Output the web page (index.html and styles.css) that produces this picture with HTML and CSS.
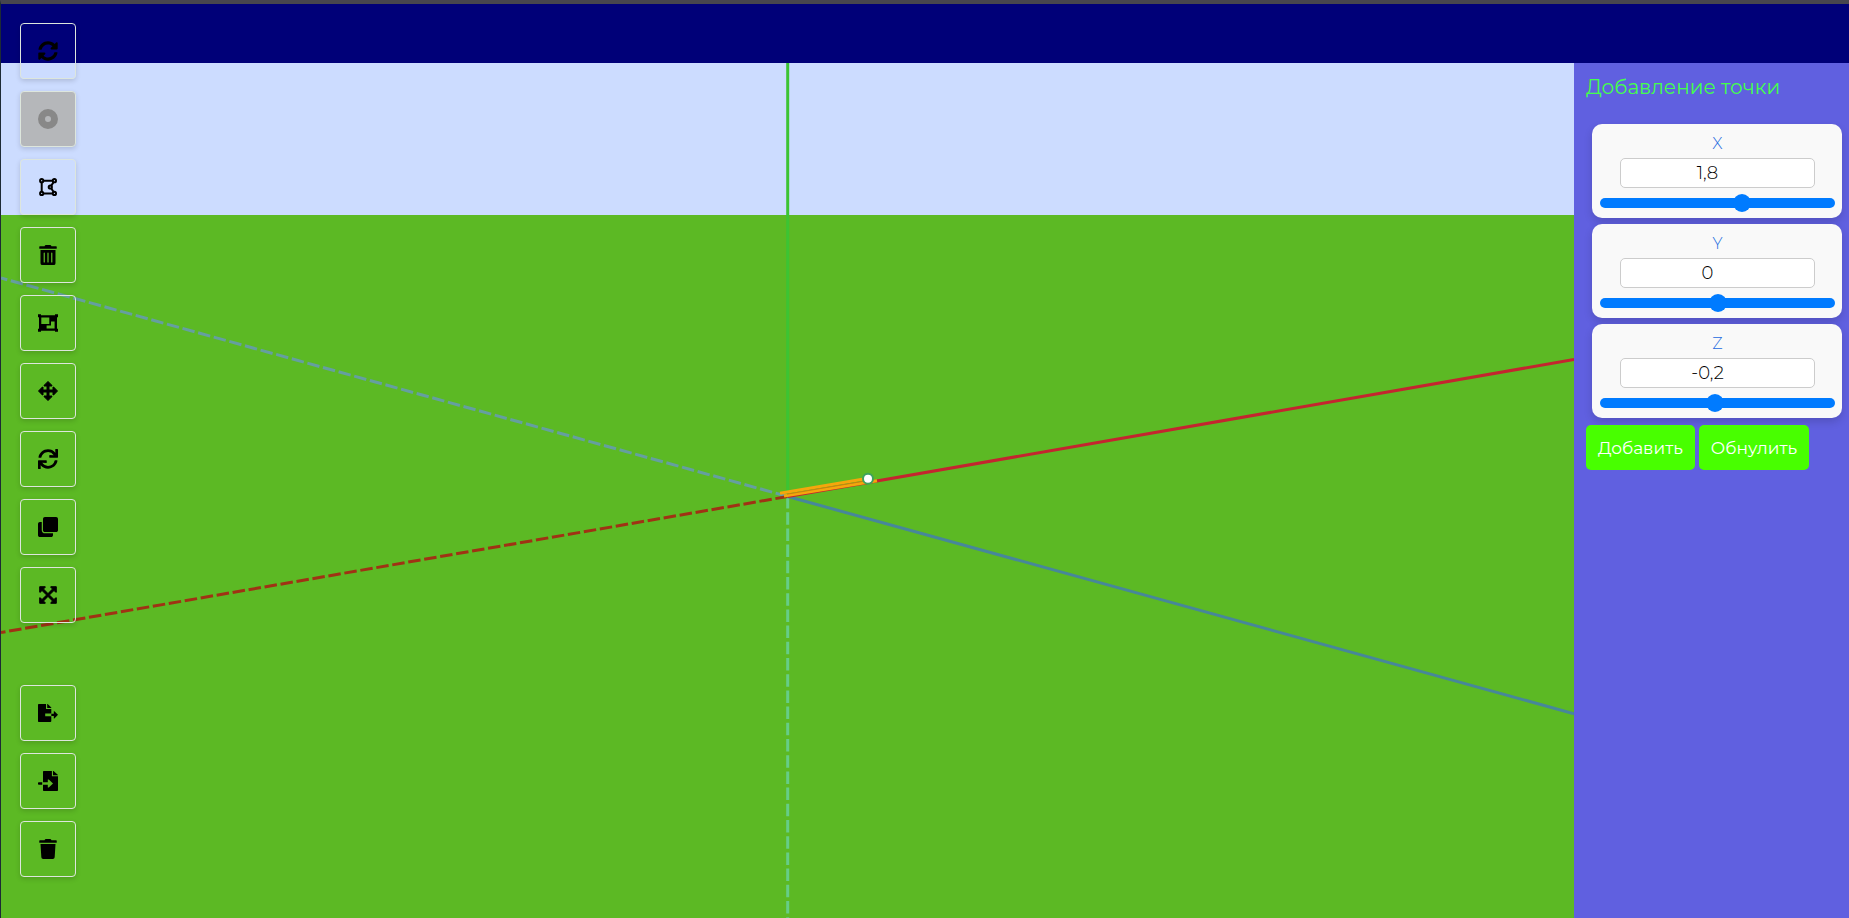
FILE: index.html
```html
<!DOCTYPE html>
<html lang="ru">
<head>
<meta charset="utf-8">
<title>Добавление точки</title>
<link rel="stylesheet" href="styles.css">
</head>
<body>
<header class="header"></header>
<main class="workspace">
  <svg class="scene" viewBox="0 0 1573 855" preserveAspectRatio="xMidYMid slice" role="img" aria-label="Оси координат">
    <rect class="sky" width="1573" height="855"/>
    <rect class="ground" y="152" width="1573" height="703"/>
    <path class="axis axis-y" d="M786.7 0V433"/>
    <path class="axis axis-y-neg" d="M786.7 433V855"/>
    <path class="axis axis-z-neg" d="M786.7 433.5L0 215"/>
    <path class="axis axis-x-neg" d="M786.7 433.5L0 569.5"/>
    <path class="axis axis-z" d="M786.7 433.5L1573 650.7"/>
    <path class="axis axis-x" d="M786.7 433.5L1573 296.5"/>
    <path class="segment" d="M779 430.2L863 415.9M783 433L876 417.7"/>
    <path class="segment-core" d="M786 431.2L863 418.2"/>
    <circle class="point" cx="867" cy="415.7" r="5"/>
  </svg>

  <aside class="panel">
    <h1 class="panel-title">Добавление точки</h1>
    <form class="form">
      <div class="cards">
        <div class="card">
          <label class="card-label" for="x">X</label>
          <input class="value" id="x" type="text" inputmode="decimal" value="1,8">
          <input class="slider" type="range" aria-label="X" min="-8" max="8" step="0.1" value="1.8">
        </div>
        <div class="card">
          <label class="card-label" for="y">Y</label>
          <input class="value" id="y" type="text" inputmode="decimal" value="0">
          <input class="slider" type="range" aria-label="Y" min="-8" max="8" step="0.1" value="0">
        </div>
        <div class="card">
          <label class="card-label" for="z">Z</label>
          <input class="value" id="z" type="text" inputmode="decimal" value="-0,2">
          <input class="slider" type="range" aria-label="Z" min="-8" max="8" step="0.1" value="-0.2">
        </div>
      </div>
      <div class="actions">
        <button class="action" type="button">Добавить</button>
        <button class="action" type="reset">Обнулить</button>
      </div>
    </form>
  </aside>
</main>

<nav class="toolbar" aria-label="Инструменты">
  <div class="tools">
    <button class="tool" type="button" aria-label="Сбросить вид"><svg class="icon" viewBox="0 0 512 512"><path d="M370.72 133.28C339.458 104.008 298.888 87.962 255.848 88c-77.458.068-144.328 53.178-162.791 126.85-1.344 5.363-6.122 9.15-11.651 9.15H24.103c-7.498 0-13.194-6.807-11.807-14.176C33.933 94.924 134.813 8 256 8c66.448 0 126.791 26.136 171.315 68.685L463.03 40.97C478.149 25.851 504 36.559 504 57.941V192c0 13.255-10.745 24-24 24H345.941c-21.382 0-32.09-25.851-16.971-40.971l41.75-41.749zM32 296h134.059c21.382 0 32.09 25.851 16.971 40.971l-41.75 41.75c31.262 29.273 71.835 45.319 114.876 45.28 77.418-.07 144.315-53.144 162.787-126.849 1.344-5.363 6.122-9.15 11.651-9.15h57.304c7.498 0 13.194 6.807 11.807 14.176C478.067 417.076 377.187 504 256 504c-66.448 0-126.791-26.136-171.315-68.685L48.97 471.03C33.851 486.149 8 475.441 8 454.059V320c0-13.255 10.745-24 24-24z"/></svg></button>
    <button class="tool" type="button" aria-label="Точка" disabled><svg class="icon" viewBox="0 0 20 20"><path fill-rule="evenodd" d="M10 0a10 10 0 1 0 0 20a10 10 0 1 0 0-20zM10 7a3 3 0 1 1 0 6a3 3 0 1 1 0-6z"/></svg></button>
    <button class="tool" type="button" aria-label="Многоугольник"><svg class="icon icon-line" viewBox="0 0 20 20"><path d="M5.5 3.7H14.5M5.5 16.4H14.5M3.7 5.5V14.5M15.5 5.3L13.3 8.6M15.5 14.8L13.3 11.5"/><circle cx="3.7" cy="3.7" r="1.6"/><circle cx="16.4" cy="3.7" r="1.6"/><circle cx="3.7" cy="16.4" r="1.6"/><circle cx="16.4" cy="16.4" r="1.6"/><circle cx="12.3" cy="10" r="1.6"/></svg></button>
    <button class="tool" type="button" aria-label="Удалить"><svg class="icon" viewBox="0 0 448 512"><path d="M32 464a48 48 0 0 0 48 48h288a48 48 0 0 0 48-48V128H32zm272-256a16 16 0 0 1 32 0v224a16 16 0 0 1-32 0zm-96 0a16 16 0 0 1 32 0v224a16 16 0 0 1-32 0zm-96 0a16 16 0 0 1 32 0v224a16 16 0 0 1-32 0zM432 32H312l-9.4-18.7A24 24 0 0 0 281.1 0H166.8a23.72 23.72 0 0 0-21.4 13.3L136 32H16A16 16 0 0 0 0 48v32a16 16 0 0 0 16 16h416a16 16 0 0 0 16-16V48a16 16 0 0 0-16-16z"/></svg></button>
    <button class="tool" type="button" aria-label="Сгруппировать"><svg class="icon" viewBox="0 0 20 20"><path fill-rule="evenodd" d="M0 1.2H3V2.2H17V1.2H20V4.2H19V15.8H20V18.8H17V17.8H3V18.8H0V15.8H1V4.2H0zM3.3 4.4V11H11.3V4.4zM13 8.4V12.6H8.6V15.4H16.6V8.4z"/></svg></button>
    <button class="tool" type="button" aria-label="Переместить"><svg class="icon icon-round" viewBox="0 0 20 20"><path d="M10 .5L14 4.4V5H11V9H15V6H15.6L19.5 10L15.6 14H15V11H11V15H14V15.6L10 19.5L6 15.6V15H9V11H5V14H4.4L.5 10L4.4 6H5V9H9V5H6V4.4z"/></svg></button>
    <button class="tool" type="button" aria-label="Повернуть"><svg class="icon" viewBox="0 0 512 512"><path d="M440.65 12.57l4 82.77A247.16 247.16 0 0 0 255.83 8C134.73 8 33.91 94.92 12.29 209.82A12 12 0 0 0 24.09 224h49.05a12 12 0 0 0 11.67-9.26 175.91 175.91 0 0 1 317-56.94l-101.46-4.86a12 12 0 0 0-12.57 12v47.41a12 12 0 0 0 12 12H500a12 12 0 0 0 12-12V12a12 12 0 0 0-12-12h-47.37a12 12 0 0 0-11.98 12.57zM255.83 432a175.61 175.61 0 0 1-146-77.8l101.8 4.87a12 12 0 0 0 12.57-12v-47.4a12 12 0 0 0-12-12H12a12 12 0 0 0-12 12V500a12 12 0 0 0 12 12h47.35a12 12 0 0 0 12-12.6l-4.15-82.57A247.17 247.17 0 0 0 255.83 504c121.11 0 221.93-86.92 243.55-201.82a12 12 0 0 0-11.8-14.18h-49.05a12 12 0 0 0-11.67 9.26A175.86 175.86 0 0 1 255.83 432z"/></svg></button>
    <button class="tool" type="button" aria-label="Копировать"><svg class="icon" viewBox="0 0 512 512"><path d="M464 0c26.51 0 48 21.49 48 48v288c0 26.51-21.49 48-48 48H176c-26.51 0-48-21.49-48-48V48c0-26.51 21.49-48 48-48h288M176 416c-44.112 0-80-35.888-80-80V128H48c-26.51 0-48 21.49-48 48v288c0 26.51 21.49 48 48 48h288c26.51 0 48-21.49 48-48v-48H176z"/></svg></button>
    <button class="tool" type="button" aria-label="Масштабировать"><svg class="icon icon-round" viewBox="0 0 20 20"><path d="M1.7 1.7H7.2V2.3L5.5 4L10 8.6L14.5 4L12.8 2.3V1.7H18.3V7.2H17.7L16 5.5L11.4 10L16 14.5L17.7 12.8H18.3V18.3H12.8V17.7L14.5 16L10 11.4L5.5 16L7.2 17.7V18.3H1.7V12.8H2.3L4 14.5L8.6 10L4 5.5L2.3 7.2H1.7z"/></svg></button>
  </div>
  <div class="tools">
    <button class="tool" type="button" aria-label="Экспорт"><svg class="icon" viewBox="0 0 20 20"><path d="M1 1H8V6H13.3V10.5H7.2V13.2H13.3V18C13.3 18.6 13 19 12.4 19H1C.4 19 0 18.6 0 18V2C0 1.4 .4 1 1 1zM9.2 1H9.7L13.3 4.6V5H9.2zM13.3 10.7H15.8V8.2H16.4L20 11.8L16.4 15.4H15.8V12.9H13.3z"/></svg></button>
    <button class="tool" type="button" aria-label="Импорт"><svg class="icon" viewBox="0 0 20 20"><path d="M6 0H13.9V5.3H20V19C20 19.6 19.6 20 19 20H6C5.4 20 5 19.6 5 19V13.8H9.8V16.4H10.8L15 12.4L10.8 8.6H9.8V11.2H5V1C5 .4 5.4 0 6 0zM15 0H15.5L20 4V4.2H15zM.8 11.2H4.2V13.8H.8C.3 13.8 0 13.5 0 13V12C0 11.5 .3 11.2 .8 11.2z"/></svg></button>
    <button class="tool" type="button" aria-label="Очистить сцену"><svg class="icon" viewBox="0 0 448 512"><path d="M432 32H312l-9.4-18.7A24 24 0 0 0 281.1 0H166.8a23.72 23.72 0 0 0-21.4 13.3L136 32H16A16 16 0 0 0 0 48v32a16 16 0 0 0 16 16h416a16 16 0 0 0 16-16V48a16 16 0 0 0-16-16zM53.2 467a48 48 0 0 0 47.9 45h245.8a48 48 0 0 0 47.9-45L416 128H32z"/></svg></button>
  </div>
</nav>
</body>
</html>
```
FILE: styles.css
```css
* {
  box-sizing: border-box;
}

body {
  position: relative;
  display: flex;
  flex-direction: column;
  min-height: 100vh;
  margin: 0;
  border-top: 4px solid #47464e;
  border-left: 1px solid #1d2a35;
  background: #6060e0;
  font-family: Montserrat, Inter, "Open Sans", sans-serif;
}

.header {
  flex: none;
  height: 59px;
  background: #000078;
}

.workspace {
  flex: 1;
  display: grid;
  grid-template-columns: minmax(0, 1fr) 275px;
}

.scene {
  display: block;
  width: 100%;
  height: 100%;
  min-height: 0;
}

.sky {
  fill: #ccdcff;
}

.ground {
  fill: #5cb924;
}

.axis {
  fill: none;
  stroke-width: 3;
}

.axis-y {
  stroke: #3cc433;
}

.axis-y-neg {
  stroke: #66cd88;
  stroke-dasharray: 12.5 3.7;
}

.axis-x {
  stroke: #c4252f;
}

.axis-x-neg {
  stroke: #a03214;
  stroke-dasharray: 12.5 3.7;
}

.axis-z {
  stroke: #47879a;
}

.axis-z-neg {
  stroke: #659fa0;
  stroke-dasharray: 12.5 3.7;
}

.segment {
  fill: none;
  stroke: #f5a60c;
  stroke-width: 3;
}

.segment-core {
  fill: none;
  stroke: #c9830f;
  stroke-width: 1;
}

.point {
  fill: #fff;
  stroke: #3da35d;
  stroke-width: 2;
}

.panel {
  padding: 12px 7px 12px 12px;
  background: #6060e0;
}

.panel-title {
  margin: 0 0 25px;
  color: #44ff4c;
  font-size: 20px;
  font-weight: 400;
  line-height: 24px;
}

.cards {
  display: grid;
  gap: 6px;
  margin-left: 6px;
}

.card {
  display: flex;
  flex-direction: column;
  align-items: center;
  padding: 10px 7px 9px 8px;
  border-radius: 10px;
  background: #f9f9f9;
  box-shadow: 0 4px 8px rgba(0, 0, 0, 0.15);
}

.card-label {
  margin-bottom: 4px;
  color: #1c6ae0;
  font-size: 16px;
  font-weight: 300;
  line-height: 20px;
}

.value {
  width: 83%;
  height: 30px;
  margin-bottom: 6px;
  padding: 0 20px 0 0;
  border: 1px solid #ccc;
  border-radius: 5px;
  background: #fff;
  color: #000;
  font: 300 18px/24px Montserrat, Inter, "Open Sans", sans-serif;
  text-align: center;
}

.slider {
  width: 100%;
  height: 18px;
  margin: 0 0 -3px;
  appearance: none;
  background: transparent;
}

.slider::-webkit-slider-runnable-track {
  height: 10px;
  border-radius: 5px;
  background: #007bff;
}

.slider::-webkit-slider-thumb {
  appearance: none;
  width: 18px;
  height: 18px;
  margin-top: -4px;
  border-radius: 50%;
  background: #007bff;
}

.actions {
  display: flex;
  gap: 4px;
  margin-top: 7px;
}

.action {
  height: 45px;
  padding: 0 12px;
  border: 0;
  border-radius: 5px;
  background: #48ff00;
  color: #fff;
  font: 400 17px/24px Montserrat, Inter, "Open Sans", sans-serif;
}

.toolbar {
  position: absolute;
  top: 19px;
  left: 19px;
  display: grid;
  gap: 62px;
}

.tools {
  display: grid;
  gap: 12px;
}

.tool {
  display: flex;
  align-items: center;
  justify-content: center;
  width: 56px;
  height: 56px;
  padding: 0;
  border: 1px solid #dde6dd;
  border-radius: 4px;
  background: transparent;
  color: #000;
  box-shadow: 0 2px 5px rgba(0, 0, 0, 0.15);
}

.tool:disabled {
  background: #b5b7ba;
  color: #888;
}

.icon {
  width: 20px;
  height: 20px;
  fill: currentColor;
}

.icon-line {
  fill: none;
  stroke: currentColor;
  stroke-width: 2;
}

.icon-round {
  stroke: currentColor;
  stroke-width: 1;
  stroke-linejoin: round;
}
```
